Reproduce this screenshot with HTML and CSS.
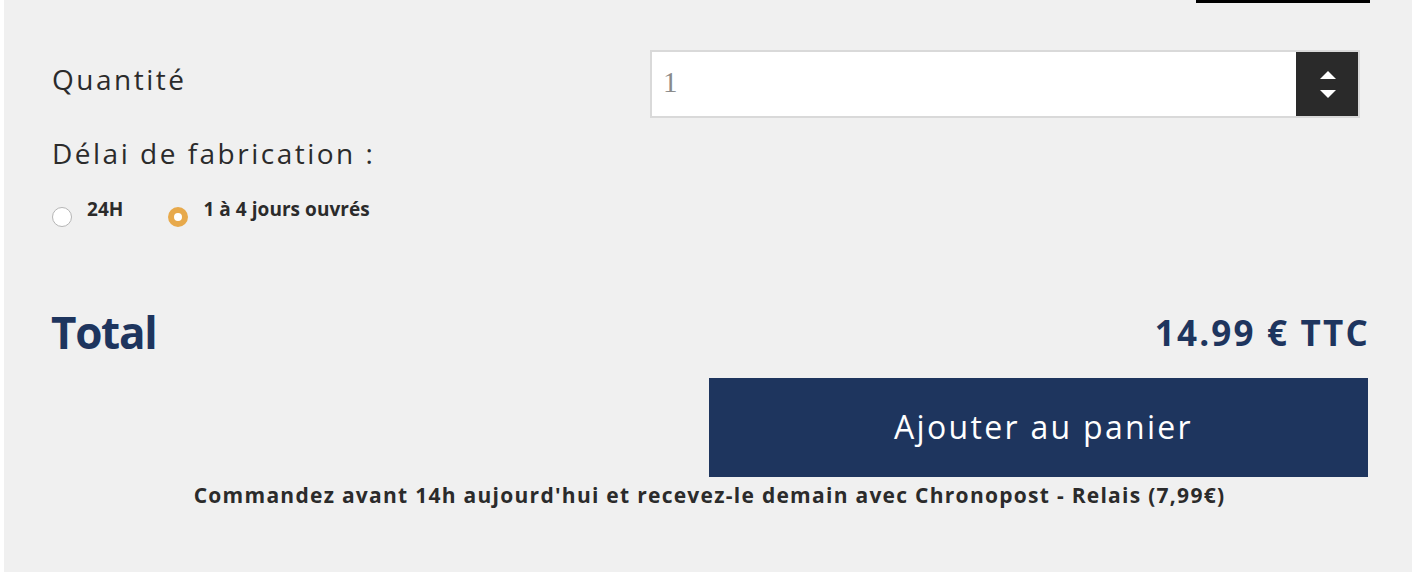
FILE: index.html
```html
<!DOCTYPE html>
<html lang="fr">
<head>
<meta charset="utf-8">
<link rel="stylesheet" href="styles.css">
</head>
<body>
<div class="page">
  <div class="topbar"><span class="topline"></span></div>
  <div class="qty-row">
    <span class="label">Quantité</span>
    <div class="qty-input">
      <span class="qty-value">1</span>
      <div class="stepper">
        <svg width="16" height="27" viewBox="0 0 16 27"><polygon points="8,0 16,8 0,8" fill="#fff"/><polygon points="0,19 16,19 8,27" fill="#fff"/></svg>
      </div>
    </div>
  </div>
  <div class="label delay">Délai de fabrication :</div>
  <div class="radios">
    <label class="radio"><span class="dot"></span><span class="rtext">24H</span></label>
    <label class="radio"><span class="dot checked"></span><span class="rtext">1 à 4 jours ouvrés</span></label>
  </div>
  <div class="total-row">
    <span class="total">Total</span>
    <span class="price">14.99 € TTC</span>
  </div>
  <div class="btn-row"><button class="add">Ajouter au panier</button></div>
  <p class="note">Commandez avant 14h aujourd'hui et recevez-le demain avec Chronopost - Relais (7,99€)</p>
</div>
</body>
</html>
```
FILE: styles.css
```css
html, body { margin: 0; padding: 0; background: #ffffff; }
body { font-family: "Open Sans", "Noto Sans", sans-serif; color: #2b2b2b; }
.page {
  margin-left: 4px;
  width: 1408px;
  height: 572px;
  background: #f0f0f0;
  box-sizing: border-box;
  padding: 0 44px 0 47px;
  display: flex;
  flex-direction: column;
}
.topbar { display: flex; justify-content: flex-end; margin-right: -2px; }
.topline { display: block; width: 174px; height: 3px; background: #000; }
.qty-row { display: flex; justify-content: space-between; align-items: flex-start; margin-top: 47px; margin-right: 8px; }
.label { font-size: 28px; line-height: 34px; letter-spacing: 2.5px; color: #2b2b2b; padding-left: 1px; }
.qty-row .label { margin-top: 12px; }
.qty-input {
  width: 710px; height: 68px; box-sizing: border-box;
  border: 2px solid #d9d9d9; background: #fff;
  display: flex; align-items: stretch; justify-content: space-between;
}
.qty-value { font-family: "Liberation Serif", serif; font-size: 29px; color: #8a8a8a; padding-left: 11px; align-self: center; margin-top: -4px; }
.stepper { width: 60px; background: #2a2a2a; display: flex; align-items: center; justify-content: center; padding-left: 2px; }
.delay { margin-top: 18px; }
.radios { display: flex; gap: 44px; margin-top: 27px; }
.radio { display: flex; align-items: flex-start; gap: 15px; }
.dot {
  width: 20px; height: 20px; box-sizing: border-box; border-radius: 50%;
  border: 1px solid #b5b5b5; background: #fff; margin-top: 10px; margin-left: 1px;
}
.dot.checked { border: 6px solid #e7a94b; background: #fff; }
.rtext { font-size: 19px; line-height: 24px; font-weight: 700; letter-spacing: 0.05px; color: #2b2b2b; }
.total-row { display: flex; justify-content: space-between; align-items: flex-start; margin-top: 79px; }
.total { font-size: 44px; line-height: 52px; font-weight: 700; letter-spacing: -1.3px; color: #1e355e; }
.price { font-size: 35px; line-height: 52px; font-weight: 700; letter-spacing: 2.2px; margin-right: -2px; color: #1e355e; margin-top: 1px; }
.btn-row { display: flex; justify-content: flex-end; margin-top: 19px; }
.add {
  width: 659px; height: 99px; border: 0; background: #1e355e; color: #fff;
  font-family: "Open Sans", "Noto Sans", sans-serif; font-size: 32px; letter-spacing: 2.3px;
  display: flex; align-items: center; justify-content: center; padding: 0 0 2px 10px;
}
.note { margin: 5px 0 0; text-align: center; font-size: 21px; line-height: 26px; font-weight: 700; letter-spacing: 1.27px; color: #2b2b2b; }
```
